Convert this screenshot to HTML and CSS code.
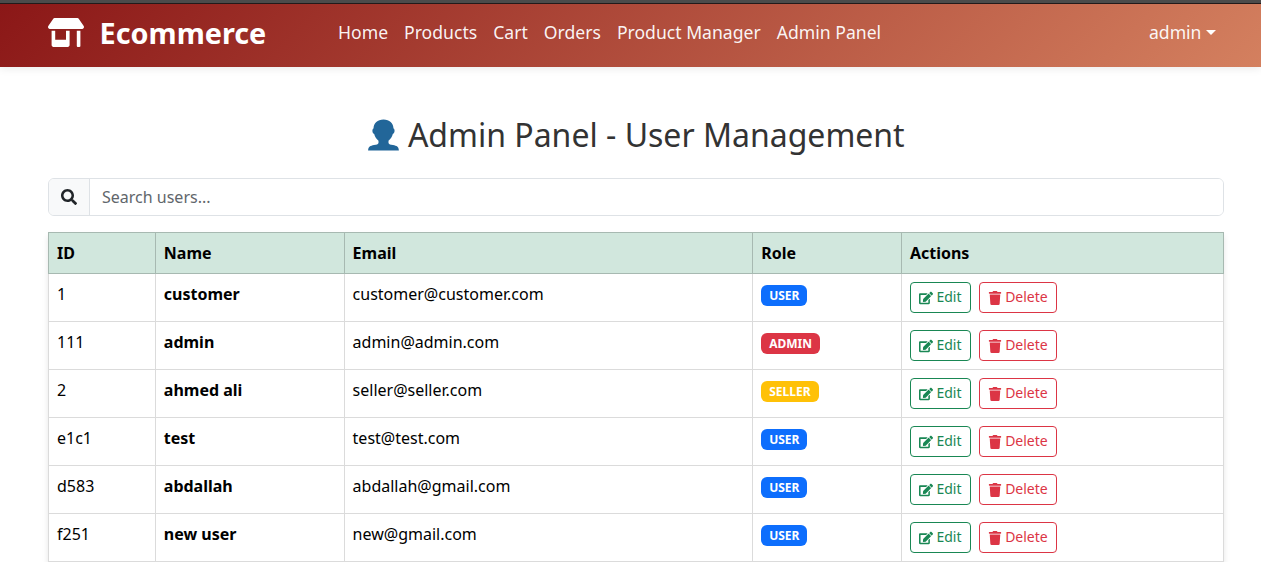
FILE: index.html
```html
<!DOCTYPE html>
<html lang="en">
<head>
<meta charset="utf-8">
<title>Admin Panel</title>
<link rel="stylesheet" href="styles.css">
</head>
<body>
<svg class="sprite" aria-hidden="true">
  <symbol id="edit" viewBox="0 0 576 512"><path d="M402.6 83.2l90.2 90.2c3.8 3.8 3.8 10 0 13.8L274.4 405.6l-92.8 10.3c-12.4 1.4-22.9-9.1-21.5-21.5l10.3-92.8L388.8 83.2c3.8-3.8 10-3.8 13.8 0zm162-22.9l-48.8-48.8c-15.2-15.2-39.9-15.2-55.2 0l-35.4 35.4c-3.8 3.8-3.8 10 0 13.8l90.2 90.2c3.8 3.8 10 3.8 13.8 0l35.4-35.4c15.2-15.3 15.2-40 0-55.2zM384 346.2V448H64V128h229.8c3.2 0 6.2-1.3 8.5-3.5l40-40c7.6-7.6 2.2-20.5-8.5-20.5H48C21.5 64 0 85.5 0 112v352c0 26.5 21.5 48 48 48h352c26.5 0 48-21.5 48-48V306.2c0-10.7-12.9-16-20.5-8.5l-40 40c-2.2 2.3-3.5 5.3-3.5 8.5z"/></symbol>
  <symbol id="trash" viewBox="0 0 448 512"><path d="M432 32H312l-9.4-18.7A24 24 0 0 0 281.1 0H166.8a23.7 23.7 0 0 0-21.4 13.3L136 32H16A16 16 0 0 0 0 48v32a16 16 0 0 0 16 16h416a16 16 0 0 0 16-16V48a16 16 0 0 0-16-16zM32 128l21.2 339a48 48 0 0 0 47.9 45h245.8a48 48 0 0 0 47.9-45L416 128z"/></symbol>
</svg>
<nav class="navbar">
  <a class="brand">
    <svg class="brand-icon" viewBox="0 0 640 512"><path d="M320 384H128V224H64v256c0 17.7 14.3 32 32 32h256c17.7 0 32-14.300 32-32V224h-64v160zm314.600-241.800l-85.300-128c-6-8.900-16-14.200-26.700-14.200H117.400c-10.700 0-20.700 5.300-26.600 14.200l-85.300 128c-14.200 21.300 1 49.800 26.600 49.800H608c25.500 0 40.700-28.500 26.600-49.800zM512 496c0 8.800 7.200 16 16 16h32c8.800 0 16-7.200 16-16V224h-64v272z"/></svg>
    <span>Ecommerce</span>
  </a>
  <div class="links"><a>Home</a><a>Products</a><a>Cart</a><a>Orders</a><a>Product Manager</a><a>Admin Panel</a></div>
  <a class="account">admin<span class="caret"></span></a>
</nav>
<main class="page">
  <h2 class="title"><svg class="bust" viewBox="0 0 31 32"><path d="M15.500.500C21.500.500 25.300 4 25.500 9.500c1.600.300 1.500 4.900-.700 5.500-.700 3-2.100 5-4.300 6.700v2.200c.3 1.300 2 1.700 4.500 2.200 3.700.8 5.700 1.700 5.900 5.400H.100c.2-3.700 2.200-4.600 5.900-5.400 2.500-.5 4.200-.9 4.500-2.200v-2.200C8.300 20 6.900 18 6.200 15c-2.200-.6-2.300-5.200-.700-5.500C5.700 4 9.500.500 15.500.500z"/></svg><span>Admin Panel - User Management</span></h2>
  <div class="search">
    <span class="search-icon"><svg viewBox="0 0 512 512"><path d="M505 442.700L405.300 343c-4.500-4.500-10.600-7-17-7H372c27.600-35.300 44-79.700 44-128C416 93.100 322.900 0 208 0S0 93.100 0 208s93.100 208 208 208c48.300 0 92.700-16.400 128-44v16.300c0 6.400 2.500 12.500 7 17l99.700 99.700c9.400 9.400 24.600 9.400 33.900 0l28.300-28.300c9.400-9.400 9.400-24.600.1-34zM208 336c-70.700 0-128-57.200-128-128 0-70.700 57.200-128 128-128 70.700 0 128 57.200 128 128 0 70.700-57.200 128-128 128z"/></svg></span>
    <input class="search-input" type="text" placeholder="Search users...">
  </div>
  <table class="users">
    <colgroup><col class="c-id"><col class="c-name"><col class="c-email"><col class="c-role"><col class="c-actions"></colgroup>
    <thead><tr><th>ID</th><th>Name</th><th>Email</th><th>Role</th><th>Actions</th></tr></thead>
    <tbody>
      <tr><td>1</td><td class="name">customer</td><td>customer@customer.com</td><td><span class="badge user">USER</span></td><td><div class="actions"><a class="btn edit"><svg><use href="#edit"/></svg>Edit</a><a class="btn delete"><svg><use href="#trash"/></svg>Delete</a></div></td></tr>
      <tr><td>111</td><td class="name">admin</td><td>admin@admin.com</td><td><span class="badge admin">ADMIN</span></td><td><div class="actions"><a class="btn edit"><svg><use href="#edit"/></svg>Edit</a><a class="btn delete"><svg><use href="#trash"/></svg>Delete</a></div></td></tr>
      <tr><td>2</td><td class="name">ahmed ali</td><td>seller@seller.com</td><td><span class="badge seller">SELLER</span></td><td><div class="actions"><a class="btn edit"><svg><use href="#edit"/></svg>Edit</a><a class="btn delete"><svg><use href="#trash"/></svg>Delete</a></div></td></tr>
      <tr><td>e1c1</td><td class="name">test</td><td>test@test.com</td><td><span class="badge user">USER</span></td><td><div class="actions"><a class="btn edit"><svg><use href="#edit"/></svg>Edit</a><a class="btn delete"><svg><use href="#trash"/></svg>Delete</a></div></td></tr>
      <tr><td>d583</td><td class="name">abdallah</td><td>abdallah@gmail.com</td><td><span class="badge user">USER</span></td><td><div class="actions"><a class="btn edit"><svg><use href="#edit"/></svg>Edit</a><a class="btn delete"><svg><use href="#trash"/></svg>Delete</a></div></td></tr>
      <tr><td>f251</td><td class="name">new user</td><td>new@gmail.com</td><td><span class="badge user">USER</span></td><td><div class="actions"><a class="btn edit"><svg><use href="#edit"/></svg>Edit</a><a class="btn delete"><svg><use href="#trash"/></svg>Delete</a></div></td></tr>
    </tbody>
  </table>
</main>
</body>
</html>
```
FILE: styles.css
```css
* { box-sizing: border-box; }
body {
  margin: 0;
  border-top: 3px solid #4b4b4b;
  background: #fff;
  color: #000;
  font: 16px/24px "Noto Sans", sans-serif;
  overflow: hidden;
}
svg { fill: currentColor; flex: none; }
.sprite { display: none; }
.navbar {
  display: flex;
  align-items: center;
  height: 64px;
  padding: 0 45px 0 48px;
  border-top: 1px solid #221a1a;
  background: linear-gradient(135deg, #8b1717, #d4805f);
  box-shadow: 0 2px 8px rgba(0, 0, 0, .08);
  color: #fff;
}
.brand {
  display: flex;
  align-items: center;
  gap: 15.6px;
  width: 290px;
  padding-bottom: 6px;
  font-size: 28.8px;
  font-weight: 700;
  line-height: 43px;
}
.brand-icon { width: 36px; height: 29px; }
.links { display: flex; gap: 16px; flex: 1; font-size: 17.6px; padding-bottom: 8px; }
.account { display: flex; align-items: center; gap: 4.5px; font-size: 17.6px; padding-bottom: 8px; }
.links, .account { color: rgba(255, 255, 255, .95); }
.caret { margin-top: 2px; border: 5px solid transparent; border-top-color: #fff; border-bottom: 0; }
.page { padding: 48px 37px 0 48px; }
.title {
  display: flex;
  justify-content: center;
  align-items: center;
  gap: 9px;
  height: 39px;
  margin: 0 0 24px;
  padding-left: .6px;
  color: #333;
  font-size: 32px;
  font-weight: 400;
  line-height: 39px;
}
.bust { width: 31px; height: 32px; margin-top: 1px; fill: #226699; }
.search {
  display: flex;
  height: 38px;
  margin-bottom: 16px;
  border: 1px solid #dee2e6;
  border-radius: 6px;
  overflow: hidden;
}
.search-icon {
  display: flex;
  align-items: center;
  padding: 0 12px;
  border-right: 1px solid #dee2e6;
  background: #f8f9fa;
  color: #212529;
}
.search-icon svg { width: 16px; height: 16px; }
.search-input { flex: 1; border: 0; padding: 0 12px; font: inherit; }
.search-input::placeholder { color: #61666b; opacity: 1; }
.users {
  width: 100%;
  table-layout: fixed;
  border-collapse: collapse;
  box-shadow: 0 4px 6px rgba(0, 0, 0, .1);
}
.c-id { width: 106.8px; }
.c-name { width: 188.8px; }
.c-email { width: 408.6px; }
.c-role { width: 148.7px; }
th, td { padding: 8px; text-align: left; vertical-align: top; }
th { height: 41px; border: 1px solid #a7b9b1; background: #d1e7dd; }
td { height: 48px; border: 1px solid #dbdbdb; }
.name { font-weight: 700; }
.badge {
  display: inline-block;
  padding: 4px 8px;
  border-radius: 6px;
  color: #fff;
  font-size: 12px;
  font-weight: 700;
  line-height: 13px;
}
.user { background: #0d6efd; }
.admin { background: #dc3545; }
.seller { background: #ffc107; }
.actions { display: flex; gap: 8px; }
.btn {
  display: flex;
  align-items: center;
  gap: 3.6px;
  height: 31px;
  padding: 0 8px 2px;
  border: 1px solid;
  border-radius: 4px;
  font-size: 14px;
  line-height: 21px;
}
.btn svg { width: 14px; height: 14px; margin-top: 3px; }
.edit { color: #198754; }
.delete { color: #dc3545; }
```
